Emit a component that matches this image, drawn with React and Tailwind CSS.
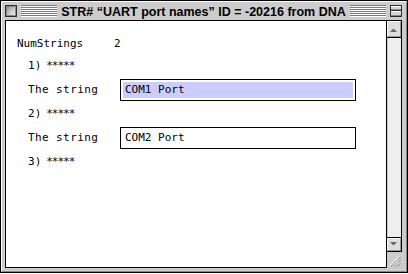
import React from "react";

function TitleLines() {
  const rows = [0, 1, 2, 3, 4, 5];
  return (
    <div className="flex-1 h-[12px] flex flex-col">
      {rows.map((r) => (
        <div key={r} className="h-[2px] border-t border-t-[#7a7a7a] border-b border-b-white" />
      ))}
    </div>
  );
}

function CloseBox() {
  return (
    <svg width="12" height="12" viewBox="0 0 12 12" className="shrink-0">
      <defs>
        <linearGradient id="cb" x1="0" y1="0" x2="1" y2="1">
          <stop offset="0" stopColor="#8a8a8a" />
          <stop offset="0.5" stopColor="#c8c8c8" />
          <stop offset="1" stopColor="#f0f0f0" />
        </linearGradient>
      </defs>
      <rect x="0.5" y="0.5" width="11" height="11" fill="#bbbbbb" stroke="#2e2e2e" />
      <rect x="1.5" y="1.5" width="9" height="9" fill="url(#cb)" stroke="#888" />
    </svg>
  );
}

function CollapseBox() {
  return (
    <svg width="12" height="12" viewBox="0 0 12 12" className="shrink-0">
      <rect x="0.5" y="0.5" width="11" height="11" fill="#d4d4d4" stroke="#2e2e2e" />
      <line x1="1" y1="5.5" x2="11" y2="5.5" stroke="#2e2e2e" />
      <line x1="1" y1="1.5" x2="11" y2="1.5" stroke="#ffffff" />
      <line x1="1" y1="4.5" x2="11" y2="4.5" stroke="#8a8a8a" />
      <line x1="1" y1="6.5" x2="11" y2="6.5" stroke="#ffffff" />
      <line x1="1" y1="10.5" x2="11" y2="10.5" stroke="#8a8a8a" />
    </svg>
  );
}

function GrowBox() {
  return (
    <div className="h-[16px] bg-[#cccccc]">
      <svg width="15" height="16" viewBox="0 0 15 16">
        <g strokeWidth="1">
          <line x1="3" y1="13.5" x2="12.5" y2="4" stroke="#ffffff" />
          <line x1="4" y1="14.5" x2="13.5" y2="5" stroke="#777777" />
          <line x1="6" y1="13.5" x2="12.5" y2="7" stroke="#ffffff" />
          <line x1="7" y1="14.5" x2="13.5" y2="8" stroke="#777777" />
          <line x1="9" y1="13.5" x2="12.5" y2="10" stroke="#ffffff" />
          <line x1="10" y1="14.5" x2="13.5" y2="11" stroke="#777777" />
        </g>
      </svg>
    </div>
  );
}

function Field({ text, selected }) {
  return (
    <div className="w-[236px] h-[22px] border border-black bg-white p-[2px]">
      <div className={selected ? "h-full bg-[#ccccff] pl-[2px] flex items-center" : "h-full bg-white pl-[2px] flex items-center"}>
        <span className="leading-[12px]">{text}</span>
      </div>
    </div>
  );
}

function Item({ n }) {
  return (
    <div className="h-[12px] mt-[7px] ml-[11px] flex">
      <span>{n})</span>
      <span className="ml-[5px] tracking-[-1px]">*****</span>
    </div>
  );
}

export default function App() {
  const mono = { fontFamily: '"DejaVu Sans Mono", "Liberation Mono", monospace' };
  return (
    <div className="w-[408px] h-[274px] bg-white">
      <div className="w-[408px] h-[273px] border border-black bg-[#cccccc]">
        <div className="h-full flex flex-col border-t border-l border-t-white border-l-white border-r border-b border-r-[#888] border-b-[#888]">
          <div className="h-[18px] flex items-center gap-[4px] pl-[3px] pr-[4px]">
            <CloseBox />
            <TitleLines />
            <span
              className="text-[12.5px] font-bold leading-[14px] text-black whitespace-nowrap pt-[1px]"
              style={{ fontFamily: '"Liberation Sans", Arial, sans-serif' }}
            >
              STR# “UART port names” ID = -20216 from DNA
            </span>
            <TitleLines />
            <CollapseBox />
          </div>
          <div className="flex-1 flex pl-[3px] pr-[4px] pb-[3px]">
            <div
              className="flex-1 border-l border-t border-b border-black bg-white pt-[17px] pl-[11px] text-[11px] leading-[12px] text-black flex flex-col"
              style={mono}
            >
              <div className="h-[12px] flex mb-[3px]">
                <span className="w-[97px]">NumStrings</span>
                <span>2</span>
              </div>
              <Item n="1" />
              <div className="h-[22px] mt-[7px] ml-[11px] flex items-center">
                <span className="w-[92px] tracking-[0.4px]">The string</span>
                <Field text="COM1 Port" selected />
              </div>
              <Item n="2" />
              <div className="h-[22px] mt-[7px] ml-[11px] flex items-center">
                <span className="w-[92px] tracking-[0.4px]">The string</span>
                <Field text="COM2 Port" />
              </div>
              <Item n="3" />
            </div>
            <div className="w-[16px] flex flex-col border-t border-l border-black">
              <div className="flex-1 flex flex-col border-r border-b border-black">
                <div className="h-[17px] border-b border-black bg-[#dddddd]">
                  <div className="h-full border-t border-l border-t-white border-l-white border-r border-b border-r-[#999] border-b-[#999]">
                    <svg width="12" height="14" viewBox="0 0 12 14">
                      <polygon points="2,10 9,10 5.5,6.5" fill="#666666" />
                    </svg>
                  </div>
                </div>
                <div className="flex-1 bg-[#eeeeee] border-l border-l-[#cccccc]" />
                <div className="h-[14px] border-t border-black bg-[#dddddd]">
                  <div className="h-full border-t border-l border-t-white border-l-white border-r border-b border-r-[#999] border-b-[#999]">
                    <svg width="12" height="11" viewBox="0 0 12 11">
                      <polygon points="2,3 9,3 5.5,6.5" fill="#666666" />
                    </svg>
                  </div>
                </div>
              </div>
              <GrowBox />
            </div>
          </div>
        </div>
      </div>
    </div>
  );
}
